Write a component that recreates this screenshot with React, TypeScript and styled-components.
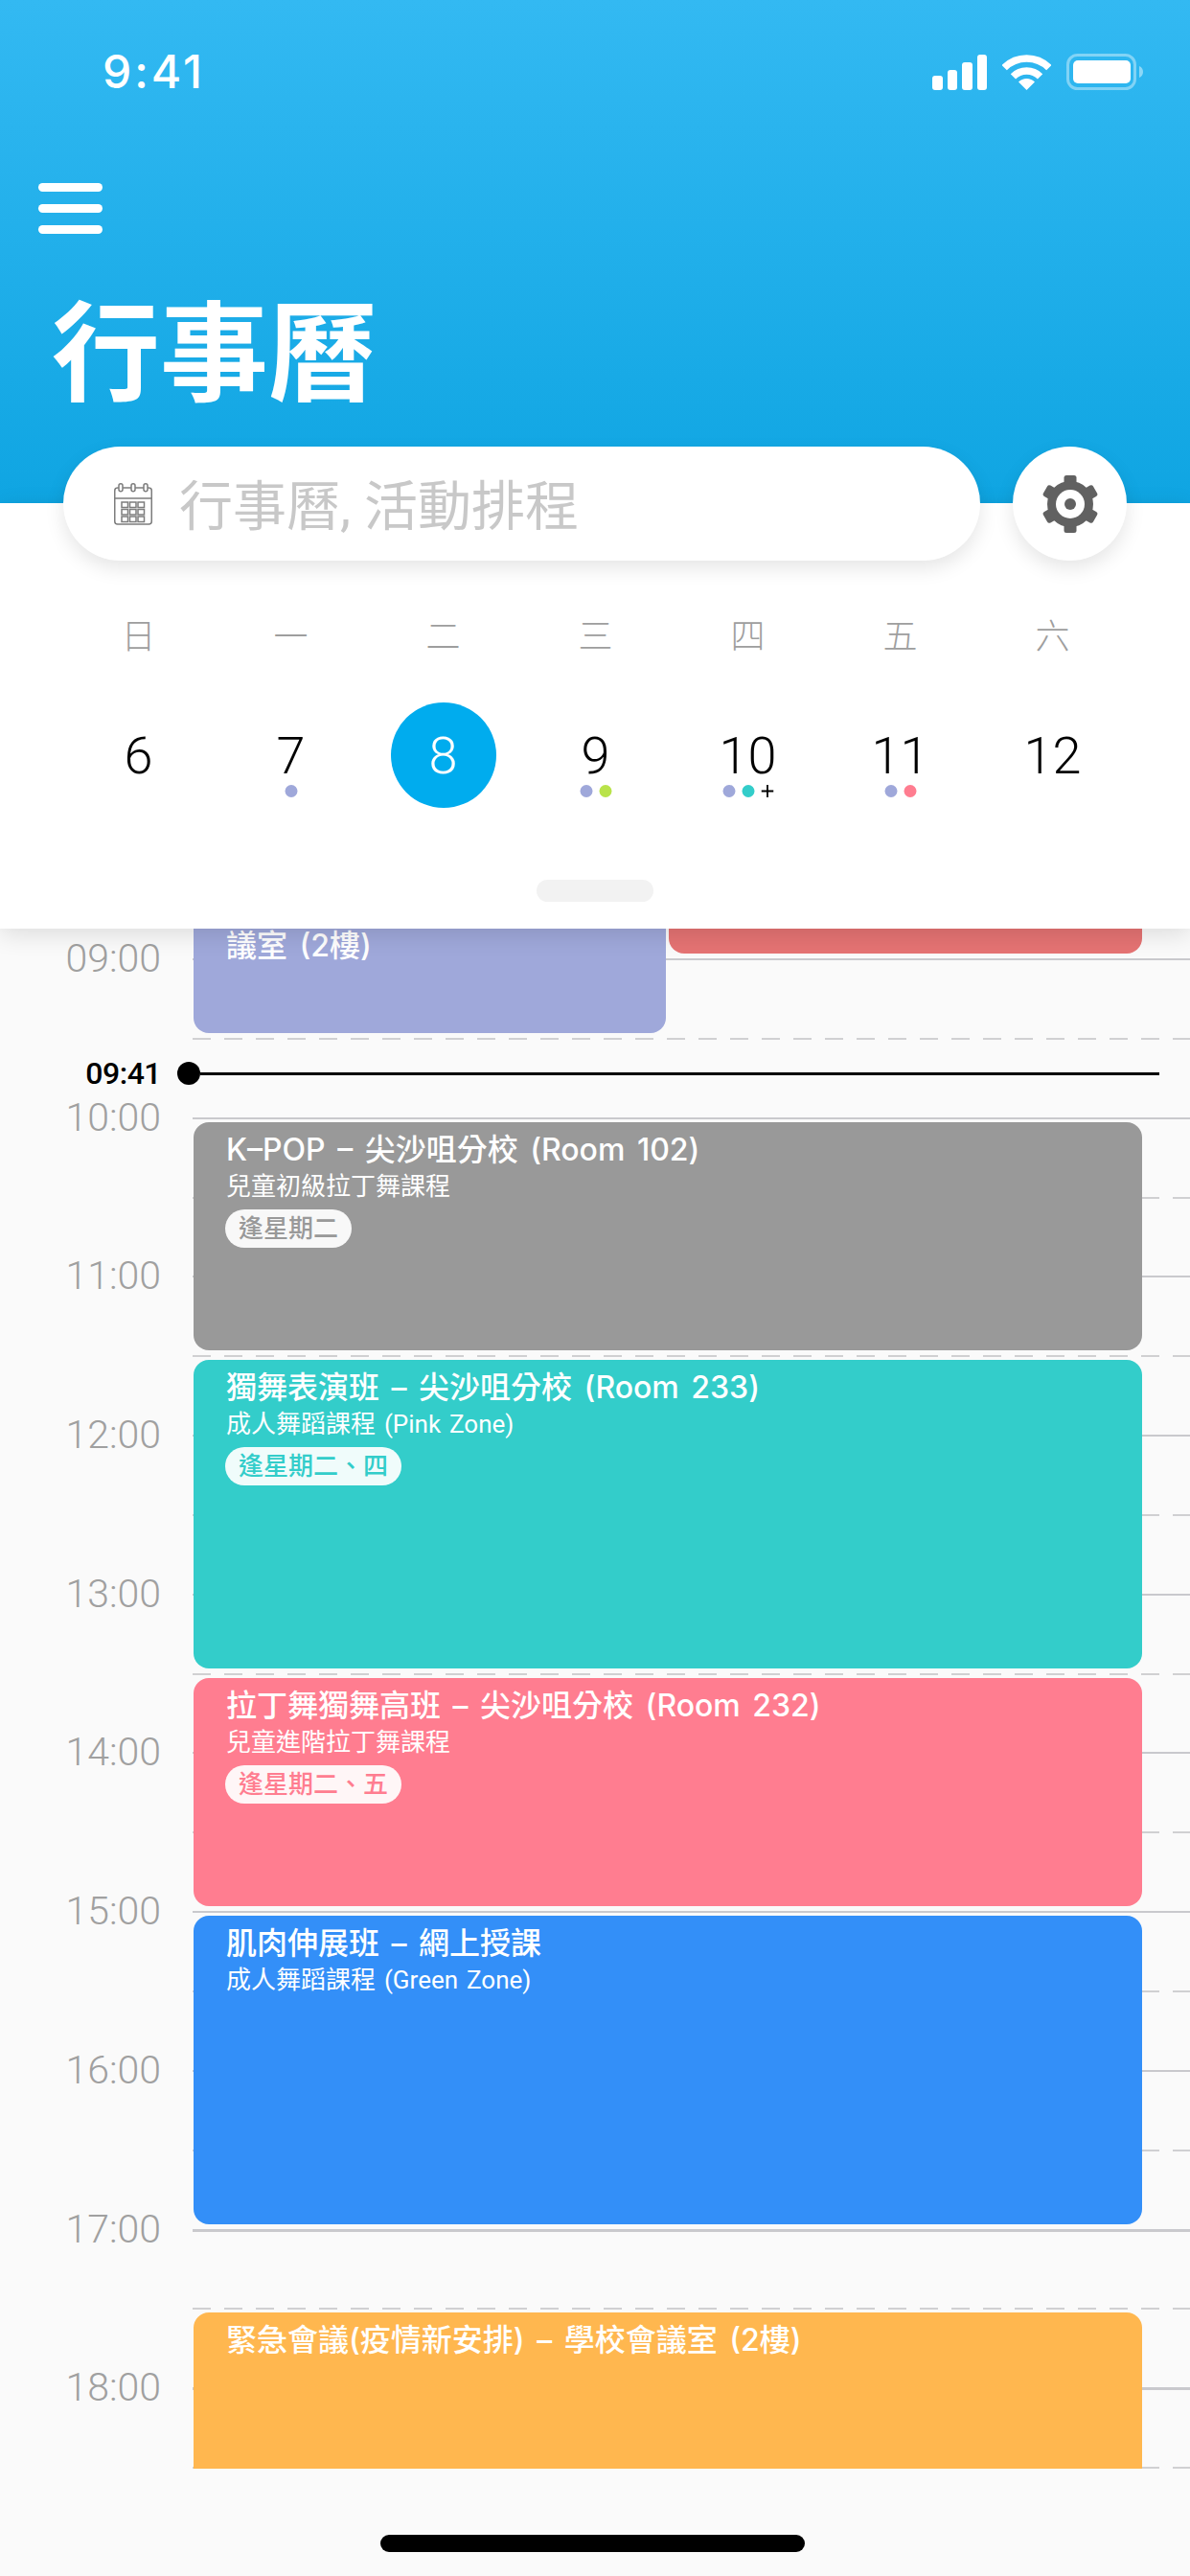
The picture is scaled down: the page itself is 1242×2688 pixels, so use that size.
import React from 'react';
import styled, { createGlobalStyle } from 'styled-components';

const FONT = `Roboto, "Noto Sans CJK TC", sans-serif`;
const EVENT_FONT = `Inter, "Noto Sans CJK TC", sans-serif`;
const HOUR = 165.7;
const FIRST_LINE = 31;

const hourY = (hour: number) => FIRST_LINE + (hour - 9) * HOUR;

const GlobalStyle = createGlobalStyle`
    html, body {
        margin: 0;
        padding: 0;
        background: #fafafa;
    }
    * {
        box-sizing: border-box;
    }
`;

const Screen = styled.div`
    display: flex;
    flex-direction: column;
    width: 1242px;
    height: 2688px;
    overflow: hidden;
    background: #fafafa;
    font-family: ${FONT};
`;

const Hero = styled.header`
    flex: 0 0 525px;
    padding-top: 50px;
    background: linear-gradient(180deg, #33b9f2 0%, #0fa5e2 100%);
    color: #fff;
`;

const StatusBar = styled.div`
    display: flex;
    align-items: center;
    justify-content: space-between;
    height: 50px;
    padding: 0 49px 0 107px;
`;

const Clock = styled.span`
    font-family: Inter, sans-serif;
    font-size: 48px;
    font-weight: 500;
    line-height: 50px;
    letter-spacing: 3px;
`;

const StatusIcons = styled.div`
    display: flex;
    align-items: flex-end;
    gap: 16px;
`;

const MenuButton = styled.div`
    display: flex;
    flex-direction: column;
    gap: 13px;
    width: 67px;
    margin: 91px 0 0 40px;
`;

const MenuBar = styled.span`
    height: 9px;
    border-radius: 5px;
    background: #fff;
`;

const PageTitle = styled.h1`
    margin: 62px 0 0 54px;
    font-size: 113px;
    font-weight: 700;
    line-height: 130px;
    letter-spacing: 0;
`;

const Panel = styled.section`
    position: relative;
    z-index: 2;
    flex: 0 0 444px;
    display: flex;
    flex-direction: column;
    background: #fff;
    box-shadow: 0 6px 24px rgba(0, 0, 0, 0.12);
`;

const SearchRow = styled.div`
    display: flex;
    gap: 34px;
    margin: -59px 0 0 66px;
`;

const SearchBox = styled.div`
    display: flex;
    align-items: center;
    gap: 28px;
    width: 957px;
    height: 119px;
    padding-left: 53px;
    border-radius: 60px;
    background: #fff;
    box-shadow: 0 8px 20px rgba(0, 0, 0, 0.1);
`;

const Placeholder = styled.span`
    padding-top: 6px;
    color: #c8c8c8;
    font-size: 56px;
    font-weight: 400;
    line-height: 64px;
`;

const SettingsButton = styled.div`
    display: flex;
    align-items: center;
    justify-content: center;
    width: 119px;
    height: 119px;
    border-radius: 50%;
    background: #fff;
    box-shadow: 0 8px 20px rgba(0, 0, 0, 0.1);
`;

const WeekGrid = styled.div`
    display: grid;
    grid-template-columns: repeat(7, 159px);
    margin: 58px 0 0 65px;
`;

const WeekLabel = styled.span`
    color: #9e9e9e;
    font-size: 36px;
    font-weight: 300;
    line-height: 44px;
    text-align: center;
`;

const DayCell = styled.div`
    position: relative;
    display: flex;
    justify-content: center;
    height: 110px;
    margin-top: 46px;
`;

const DayNumber = styled.span<{ $selected?: boolean }>`
    display: flex;
    align-items: center;
    justify-content: center;
    width: 110px;
    height: 110px;
    border-radius: 50%;
    background: ${p => (p.$selected ? '#00acee' : 'transparent')};
    color: ${p => (p.$selected ? '#fff' : '#000')};
    font-size: 54px;
    font-weight: 300;
`;

const DotRow = styled.div`
    position: absolute;
    top: 86px;
    left: 50%;
    display: flex;
    align-items: center;
    gap: 7px;
    height: 13px;
    transform: translateX(-50%);
`;

const Dot = styled.span<{ $color: string }>`
    width: 13px;
    height: 13px;
    border-radius: 50%;
    background: ${p => p.$color};
`;

const MorePlus = styled.svg`
    display: block;
    width: 13px;
    height: 13px;
`;

const Handle = styled.div`
    align-self: center;
    width: 122px;
    height: 23px;
    margin-top: 75px;
    border-radius: 12px;
    background: #f2f2f2;
`;

const Timeline = styled.main`
    position: relative;
    flex: 0 0 1607px;
    padding-top: ${FIRST_LINE}px;
    overflow: hidden;
`;

const HourRow = styled.div`
    display: flex;
    height: ${HOUR}px;
`;

const HourLabel = styled.span`
    flex: 0 0 201px;
    height: 48px;
    padding-right: 33px;
    color: #a0a0a0;
    font-size: 41px;
    font-weight: 300;
    line-height: 48px;
    text-align: right;
    transform: translateY(-24px);
`;

const HourSlots = styled.div`
    flex: 1;
    display: flex;
    flex-direction: column;
`;

const Slot = styled.div<{ $dashed?: boolean; $thick?: boolean }>`
    flex: 1;
    background-image: ${p =>
        p.$dashed
            ? 'repeating-linear-gradient(90deg, #d0d0d2 0 19px, transparent 19px 33px)'
            : 'linear-gradient(#c9c9cd, #c9c9cd)'};
    background-repeat: no-repeat;
    background-size: 100% ${p => (p.$thick ? 3 : 2)}px;
`;

const Event = styled.article<{ $color: string }>`
    position: absolute;
    padding: 10px 30px 0 34px;
    border-radius: 16px;
    background: ${p => p.$color};
    color: #fff;
    font-family: ${EVENT_FONT};
`;

const EventTitle = styled.div`
    font-size: 32px;
    font-weight: 500;
    line-height: 38px;
    word-spacing: 4px;
    white-space: nowrap;
`;

const ClippedTitle = styled(EventTitle)`
    margin-top: 41px;
    line-height: 28px;
`;

const EventNote = styled.div`
    margin-top: 3px;
    font-family: ${FONT};
    font-size: 26px;
    font-weight: 400;
    line-height: 32px;
    word-spacing: 2.5px;
    white-space: nowrap;
`;

const RepeatChip = styled.span<{ $color: string }>`
    display: inline-block;
    height: 40px;
    margin: 8px 0 0 -1px;
    padding: 0 14px;
    border-radius: 20px;
    background: rgba(255, 255, 255, 0.93);
    color: ${p => p.$color};
    font-size: 26px;
    font-weight: 500;
    line-height: 40px;
`;

const NowMarker = styled.div`
    position: absolute;
    top: 139px;
    left: 80px;
    right: 32px;
    display: flex;
    align-items: center;
    height: 24px;
`;

const NowLabel = styled.span`
    flex: 0 0 88px;
    color: #000;
    font-size: 32px;
    font-weight: 500;
    line-height: 24px;
    letter-spacing: -0.5px;
    text-align: right;
`;

const NowDot = styled.span`
    flex: 0 0 24px;
    height: 24px;
    margin-left: 17px;
    border-radius: 50%;
    background: #000;
`;

const NowLine = styled.span`
    flex: 1;
    height: 3px;
    background: #000;
`;

const HomeArea = styled.footer`
    flex: 1;
    display: flex;
    justify-content: center;
    padding-top: 69px;
`;

const HomeIndicator = styled.div`
    width: 443px;
    height: 18px;
    margin-right: 6px;
    border-radius: 9px;
    background: #000;
`;

const SignalIcon = () => (
    <svg width="57" height="37" viewBox="0 0 57 37" fill="#fff">
        <rect x="0" y="22" width="11" height="15" rx="3" />
        <rect x="16" y="16" width="10" height="21" rx="3" />
        <rect x="31" y="8" width="11" height="29" rx="3" />
        <rect x="47" y="0" width="10" height="37" rx="3" />
    </svg>
);

const WifiIcon = () => (
    <svg width="51" height="37" viewBox="0 0 51 37" fill="none" stroke="#fff" strokeWidth="7.5">
        <path d="M2.2 13.7A33 33 0 0 1 48.8 13.7" />
        <path d="M11.4 22.9A20 20 0 0 1 39.6 22.9" />
        <path d="M25.5 37L17 28.5A12 12 0 0 1 34 28.5Z" fill="#fff" stroke="none" />
    </svg>
);

const BatteryIcon = () => (
    <svg width="80" height="38" viewBox="0 0 80 38" fill="none">
        <rect x="1.5" y="1.5" width="70" height="35" rx="10" stroke="#fff" strokeOpacity="0.4" strokeWidth="3" />
        <rect x="7" y="7" width="60" height="24" rx="5" fill="#fff" />
        <path d="M76 13C79 14 80 16.500 80 19C80 21.500 79 24 76 25Z" fill="#fff" fillOpacity="0.45" />
    </svg>
);

const CalendarIcon = () => (
    <svg width="40" height="44" viewBox="0 0 40 44" fill="none" stroke="#7d7d7d" strokeWidth="1.5">
        <rect x="0.750" y="5" width="38.500" height="38" rx="3" />
        <path d="M1 16H39" />
        {[7, 20, 33].map(x => (
            <rect key={x} x={x - 2} y="0.750" width="4" height="8" rx="2" fill="#fff" />
        ))}
        {[0, 1, 2].map(row =>
            [0, 1, 2].map(col => (
                <rect key={`${row}-${col}`} x={8 + col * 8.500} y={20 + row * 7.500} width="6.500" height="5.500" />
            )),
        )}
    </svg>
);

const GearIcon = () => (
    <svg width="60" height="60" viewBox="-30 -30 60 60">
        {[0, 60, 120, 180, 240, 300].map(angle => (
            <rect key={angle} x="-6.500" y="-30" width="13" height="16" rx="2.500" fill="#616161" transform={`rotate(${angle})`} />
        ))}
        <circle r="24" fill="#616161" />
        <circle r="15" fill="#fff" />
        <circle r="6" fill="#616161" />
    </svg>
);

const PURPLE = '#9fa8da';
const TEAL = '#33cdca';
const LIME = '#b9e34a';
const PINK = '#ff7d90';

const WEEK_DAYS = ['日', '一', '二', '三', '四', '五', '六'];
const DAYS: { day: number; dots: string[]; more?: boolean; selected?: boolean }[] = [
    { day: 6, dots: [] },
    { day: 7, dots: [PURPLE] },
    { day: 8, dots: [], selected: true },
    { day: 9, dots: [PURPLE, LIME] },
    { day: 10, dots: [PURPLE, TEAL], more: true },
    { day: 11, dots: [PURPLE, PINK] },
    { day: 12, dots: [] },
];

const HOURS = [9, 10, 11, 12, 13, 14, 15, 16, 17, 18];

type CalendarEvent = {
    start: number;
    end: number;
    color: string;
    title: string;
    note?: string;
    repeat?: string;
};

const EVENTS: CalendarEvent[] = [
    {
        start: 10,
        end: 11.5,
        color: '#999999',
        title: 'K–POP – 尖沙咀分校 (Room 102)',
        note: '兒童初級拉丁舞課程',
        repeat: '逢星期二',
    },
    {
        start: 11.5,
        end: 13.5,
        color: TEAL,
        title: '獨舞表演班 – 尖沙咀分校 (Room 233)',
        note: '成人舞蹈課程 (Pink Zone)',
        repeat: '逢星期二、四',
    },
    {
        start: 13.5,
        end: 15,
        color: PINK,
        title: '拉丁舞獨舞高班 – 尖沙咀分校 (Room 232)',
        note: '兒童進階拉丁舞課程',
        repeat: '逢星期二、五',
    },
    {
        start: 15,
        end: 17,
        color: '#338ff8',
        title: '肌肉伸展班 – 網上授課',
        note: '成人舞蹈課程 (Green Zone)',
    },
    {
        start: 17.5,
        end: 19,
        color: '#ffb74f',
        title: '緊急會議(疫情新安排) – 學校會議室 (2樓)',
    },
];

const eventBox = (start: number, end: number, left: number, width: number) => ({
    top: hourY(start) + 5,
    height: (end - start) * HOUR - 10,
    left,
    width,
});

const App = () => (
    <Screen>
        <GlobalStyle />
        <Hero>
            <StatusBar>
                <Clock>9:41</Clock>
                <StatusIcons>
                    <SignalIcon />
                    <WifiIcon />
                    <BatteryIcon />
                </StatusIcons>
            </StatusBar>
            <MenuButton>
                <MenuBar />
                <MenuBar />
                <MenuBar />
            </MenuButton>
            <PageTitle>行事曆</PageTitle>
        </Hero>
        <Panel>
            <SearchRow>
                <SearchBox>
                    <CalendarIcon />
                    <Placeholder>行事曆, 活動排程</Placeholder>
                </SearchBox>
                <SettingsButton>
                    <GearIcon />
                </SettingsButton>
            </SearchRow>
            <WeekGrid>
                {WEEK_DAYS.map(label => (
                    <WeekLabel key={label}>{label}</WeekLabel>
                ))}
                {DAYS.map(item => (
                    <DayCell key={item.day}>
                        <DayNumber $selected={item.selected}>{item.day}</DayNumber>
                        {item.dots.length > 0 && (
                            <DotRow>
                                {item.dots.map(color => (
                                    <Dot key={color} $color={color} />
                                ))}
                                {item.more && (
                                    <MorePlus viewBox="0 0 13 13">
                                        <path d="M6.500 0V13M0 6.500H13" stroke="#000" strokeWidth="1.800" />
                                    </MorePlus>
                                )}
                            </DotRow>
                        )}
                    </DayCell>
                ))}
            </WeekGrid>
            <Handle />
        </Panel>
        <Timeline>
            {HOURS.map(hour => (
                <HourRow key={hour}>
                    <HourLabel>{`${String(hour).padStart(2, '0')}:00`}</HourLabel>
                    <HourSlots>
                        <Slot $thick={hour >= 17} />
                        <Slot $dashed />
                    </HourSlots>
                </HourRow>
            ))}
            <Event $color="#e57373" style={eventBox(8.4, 9, 698, 494)} />
            <Event $color={PURPLE} style={eventBox(8.5, 9.5, 202, 493)}>
                <ClippedTitle>議室 (2樓)</ClippedTitle>
            </Event>
            {EVENTS.map(item => (
                <Event key={item.title} $color={item.color} style={eventBox(item.start, item.end, 202, 990)}>
                    <EventTitle>{item.title}</EventTitle>
                    {item.note && <EventNote>{item.note}</EventNote>}
                    {item.repeat && <RepeatChip $color={item.color}>{item.repeat}</RepeatChip>}
                </Event>
            ))}
            <NowMarker>
                <NowLabel>09:41</NowLabel>
                <NowDot />
                <NowLine />
            </NowMarker>
        </Timeline>
        <HomeArea>
            <HomeIndicator />
        </HomeArea>
    </Screen>
);

export default App;
